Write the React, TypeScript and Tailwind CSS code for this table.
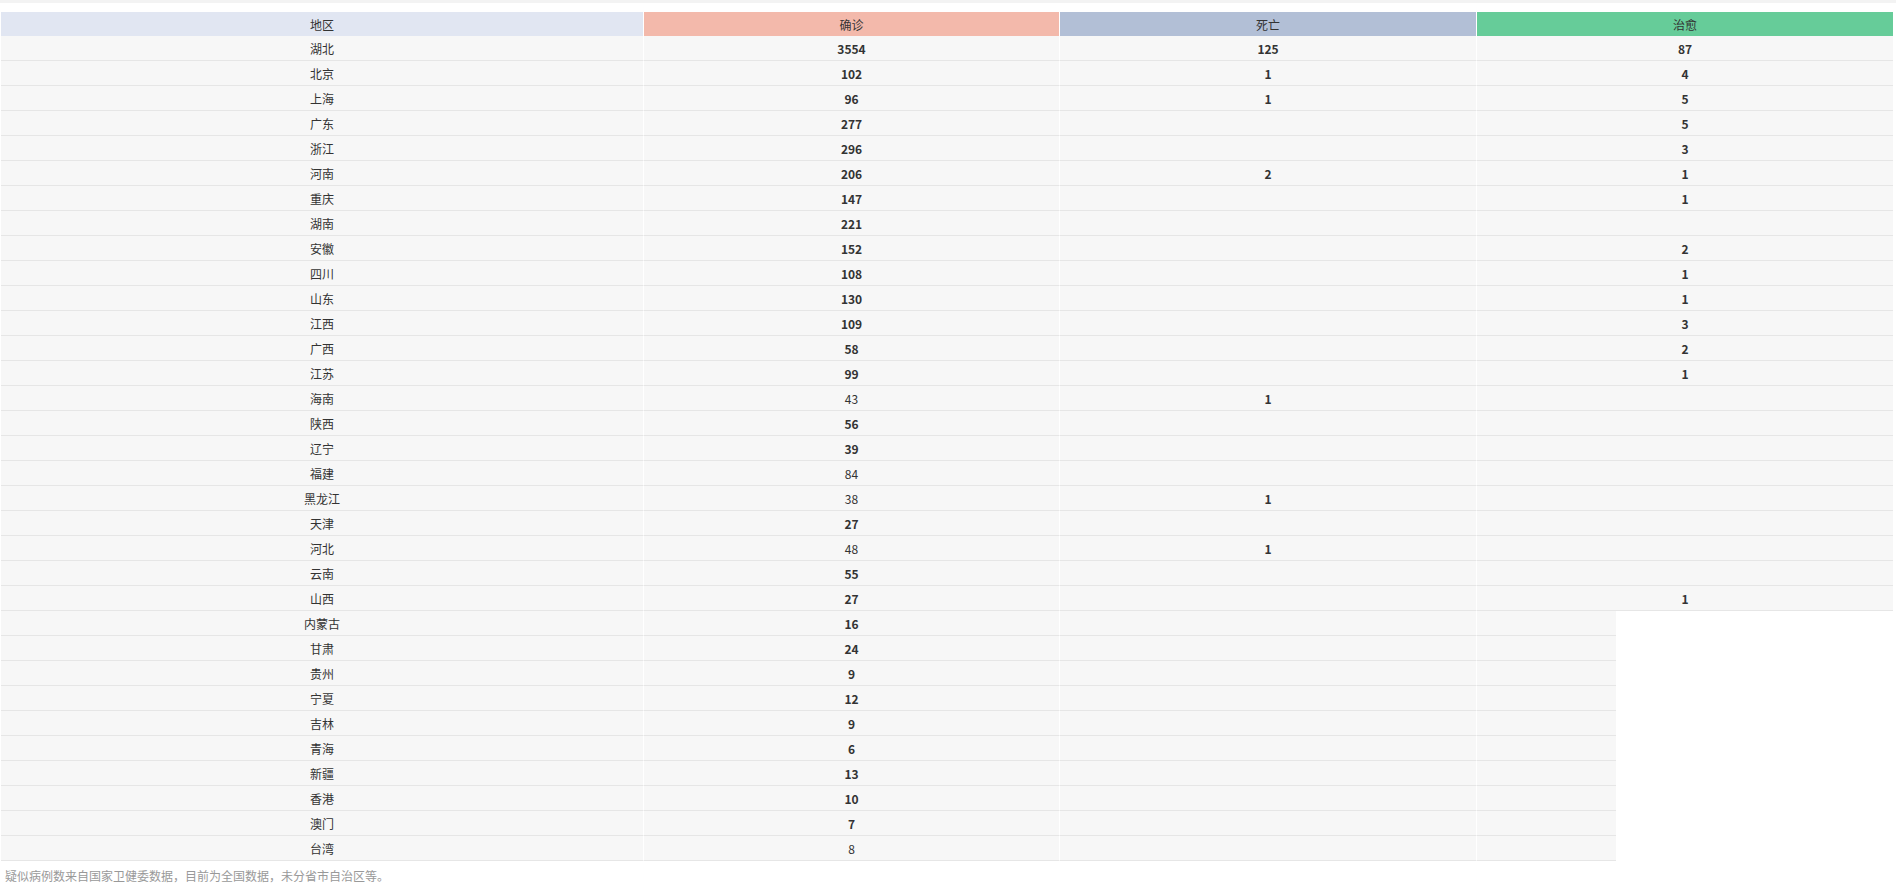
import React from 'react';

type Row = { name: string; confirmed: string; dead: string; cured: string; light?: boolean; short?: boolean };

const rows: Row[] = [
  { name: '湖北', confirmed: '3554', dead: '125', cured: '87' },
  { name: '北京', confirmed: '102', dead: '1', cured: '4' },
  { name: '上海', confirmed: '96', dead: '1', cured: '5' },
  { name: '广东', confirmed: '277', dead: '', cured: '5' },
  { name: '浙江', confirmed: '296', dead: '', cured: '3' },
  { name: '河南', confirmed: '206', dead: '2', cured: '1' },
  { name: '重庆', confirmed: '147', dead: '', cured: '1' },
  { name: '湖南', confirmed: '221', dead: '', cured: '' },
  { name: '安徽', confirmed: '152', dead: '', cured: '2' },
  { name: '四川', confirmed: '108', dead: '', cured: '1' },
  { name: '山东', confirmed: '130', dead: '', cured: '1' },
  { name: '江西', confirmed: '109', dead: '', cured: '3' },
  { name: '广西', confirmed: '58', dead: '', cured: '2' },
  { name: '江苏', confirmed: '99', dead: '', cured: '1' },
  { name: '海南', confirmed: '43', dead: '1', cured: '', light: true },
  { name: '陕西', confirmed: '56', dead: '', cured: '' },
  { name: '辽宁', confirmed: '39', dead: '', cured: '' },
  { name: '福建', confirmed: '84', dead: '', cured: '', light: true },
  { name: '黑龙江', confirmed: '38', dead: '1', cured: '', light: true },
  { name: '天津', confirmed: '27', dead: '', cured: '' },
  { name: '河北', confirmed: '48', dead: '1', cured: '', light: true },
  { name: '云南', confirmed: '55', dead: '', cured: '' },
  { name: '山西', confirmed: '27', dead: '', cured: '1' },
  { name: '内蒙古', confirmed: '16', dead: '', cured: '', short: true },
  { name: '甘肃', confirmed: '24', dead: '', cured: '', short: true },
  { name: '贵州', confirmed: '9', dead: '', cured: '', short: true },
  { name: '宁夏', confirmed: '12', dead: '', cured: '', short: true },
  { name: '吉林', confirmed: '9', dead: '', cured: '', short: true },
  { name: '青海', confirmed: '6', dead: '', cured: '', short: true },
  { name: '新疆', confirmed: '13', dead: '', cured: '', short: true },
  { name: '香港', confirmed: '10', dead: '', cured: '', short: true },
  { name: '澳门', confirmed: '7', dead: '', cured: '', short: true },
  { name: '台湾', confirmed: '8', dead: '', cured: '', short: true, light: true },
];

const font = { fontFamily: '"Microsoft YaHei", "Noto Sans CJK SC", sans-serif' };

export default function App() {
  return (
    <div className="min-h-screen bg-white text-[12px] text-[#333]" style={font}>
      <div className="h-[3px] bg-[#f3f3f3]" />
      <div className="pt-[9px] pl-px">
        <div className="flex h-[24px] items-center">
          <div className="w-[643px] h-full flex items-center justify-center pt-px bg-[#e1e6f2] border-r border-white">地区</div>
          <div className="w-[416px] h-full flex items-center justify-center pt-px bg-[#f3b9ab] border-r border-white">确诊</div>
          <div className="w-[417px] h-full flex items-center justify-center pt-px bg-[#b2bfd6] border-r border-white">死亡</div>
          <div className="w-[416px] h-full flex items-center justify-center pt-px bg-[#66cc99]">治愈</div>
        </div>
        {rows.map((r) => (
          <div key={r.name} className="flex h-[25px]">
            <div className="w-[643px] flex items-center justify-center pt-px bg-[#f7f7f7] border-r border-b border-r-white border-b-[#e6e6e6]">
              {r.name}
            </div>
            <div
              className={`w-[416px] flex items-center justify-center pt-px bg-[#f7f7f7] border-r border-b border-r-white border-b-[#e6e6e6] ${
                r.light ? 'font-normal' : 'font-bold'
              }`}
            >
              {r.confirmed}
            </div>
            <div className="w-[417px] flex items-center justify-center pt-px bg-[#f7f7f7] border-r border-b border-r-white border-b-[#e6e6e6] font-bold">
              {r.dead}
            </div>
            <div
              className={`${r.short ? 'w-[139px]' : 'w-[416px]'} flex items-center justify-center pt-px bg-[#f7f7f7] border-b border-b-[#e6e6e6] font-bold`}
            >
              {r.cured}
            </div>
          </div>
        ))}
      </div>
      <p className="px-[5px] pt-[6px] text-[12px] text-[#999]">疑似病例数来自国家卫健委数据，目前为全国数据，未分省市自治区等。</p>
    </div>
  );
}
